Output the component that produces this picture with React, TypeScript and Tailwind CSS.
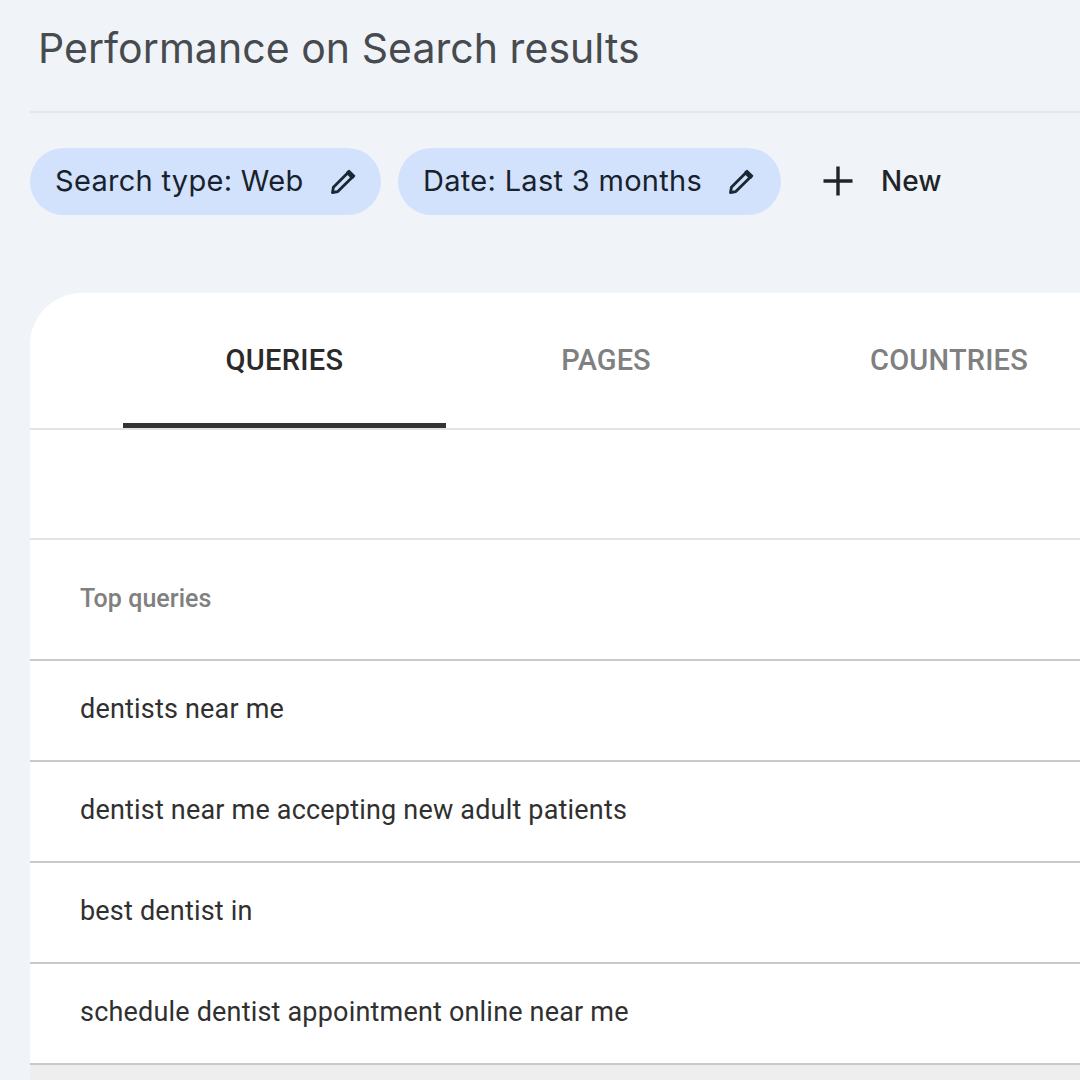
import React from "react";

function Pencil() {
  return (
    <svg width="26" height="26" viewBox="0 0 26 26" fill="none" className="shrink-0">
      <path d="M2.5 23.5 L3.4 18.2 L17.6 4 L22 8.4 L7.8 22.6 Z" stroke="#1b2733" strokeWidth="2.8" strokeLinejoin="round" />
      <path d="M17.2 3.2 L19 1.6 L24.4 7 L22.8 8.8 Z" fill="#1b2733" stroke="#1b2733" strokeWidth="1.8" strokeLinejoin="round" />
    </svg>
  );
}

function Chip({ label, box }: { label: string; box: string }) {
  return (
    <div className={`flex h-[67px] items-center justify-between rounded-full bg-[#d2e2fc] pl-[25px] ${box}`}>
      <span className="-mt-[2px] text-[29px] leading-none tracking-[0.3px] text-[#18222c]">{label}</span>
      <Pencil />
    </div>
  );
}

const rows = [
  "dentists near me",
  "dentist near me accepting new adult patients",
  "best dentist in",
  "schedule dentist appointment online near me",
];

export default function App() {
  return (
    <div className="h-[1080px] w-[1080px] overflow-hidden bg-[#f0f4f9] pl-[30px] font-['Inter',sans-serif]">
      <div className="flex h-[113px] items-start border-b-2 border-[#e3e6ea] pl-2 pt-[20px]">
        <h1 className="text-[41px] leading-[56px] tracking-[0.05px] text-[#474b4f]">Performance on Search results</h1>
      </div>
      <div className="mt-[35px] flex items-center">
        <Chip label="Search type: Web" box="w-[351px] pr-[25px]" />
        <div className="w-[17px]" />
        <Chip label="Date: Last 3 months" box="w-[383px] pr-[27px]" />
        <svg width="32" height="32" viewBox="0 0 32 32" className="-mt-[2px] ml-[41px] shrink-0" fill="none">
          <path d="M16 1.5V30.5M1.5 16H30.5" stroke="#1f2428" strokeWidth="3.4" />
        </svg>
        <span className="-mt-[2px] ml-[27px] text-[28px] font-medium text-[#1f2428]">New</span>
      </div>
      <div className="mt-[78px] h-[787px] overflow-hidden rounded-tl-[52px] bg-white font-['Roboto',sans-serif]">
        <div className="flex h-[137px] border-b-2 border-[#e3e3e3] text-[29px] font-medium">
          <div className="relative ml-[93px] flex w-[323px] shrink-0 justify-center pt-[46px] tracking-[0.3px] text-[#2a2a2a]">
            QUERIES
            <div className="absolute inset-x-0 bottom-0 h-[5px] bg-[#333333]" />
          </div>
          <div className="flex w-[320px] shrink-0 justify-center pt-[46px] tracking-[0.1px] text-[#808080]">PAGES</div>
          <div className="flex w-[366px] shrink-0 justify-center pt-[46px] tracking-[0.2px] text-[#808080]">COUNTRIES</div>
        </div>
        <div className="h-[110px] border-b-2 border-[#e3e3e3]" />
        <div className="flex h-[121px] items-center border-b-2 border-[#c9c9c9] pb-[2px] pl-[50px] text-[25px] font-medium tracking-[0.05px] text-[#808080]">
          Top queries
        </div>
        {rows.map((r) => (
          <div key={r} className="flex h-[101px] items-center border-b-2 border-[#c9c9c9] pb-[2px] pl-[50px] text-[27px] tracking-[0.19px] text-[#303030]">
            {r}
          </div>
        ))}
        <div className="h-[20px] bg-[#eeeeee]" />
      </div>
    </div>
  );
}
